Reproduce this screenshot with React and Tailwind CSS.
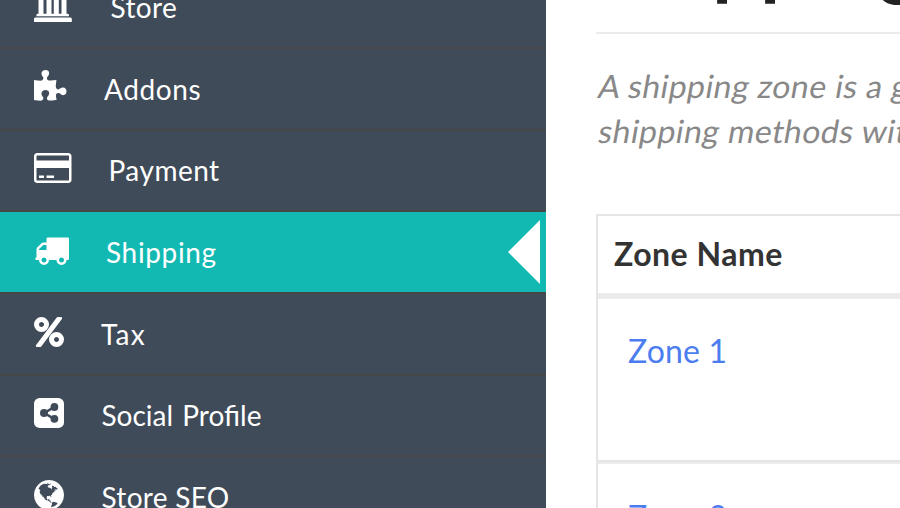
import React from "react";

const PUZZLE = "M1755 1083q0 81-44.5 135t-123.5 54q-41 0-77.5-17.5t-59-38-56.5-38-71-17.5q-110 0-110 124 0 39 16 115t15 115v5q-22 0-33 1-34 3-97.5 11.5t-115.5 13.5-98 5q-61 0-103-26.5t-42-83.5q0-37 17.5-71t38-56.5 38-59 17.5-77.5q0-79-54-123.5t-135-44.5q-84 0-143 45.5t-59 127.5q0 43 15 83t33.5 64.5 33.5 53 15 50.5q0 45-46 89-37 35-117 35-95 0-245-24-9-2-27.5-4t-27.5-4l-13-2q-1 0-3-1-2 0-2-1v-1024q2 1 17.5 3.5t34 5 21.5 3.5q150 24 245 24 80 0 117-35 46-44 46-89 0-22-15-50.5t-33.5-53-33.5-64.5-15-83q0-82 59-127.5t144-45.5q80 0 134 44.5t54 123.5q0 41-17.5 77.5t-38 59-38 56.5-17.5 71q0 57 42 83.5t103 26.5q64 0 180-15t163-17v2q-1 2-3.5 17.5t-5 34-3.5 21.5q-24 150-24 245 0 80 35 117 44 46 89 46 22 0 50.5-15t53-33.5 64.5-33.5 83-15q82 0 127.5 59t45.5 143z";

const CARD = "M1760 128q66 0 113 47t47 113v1216q0 66-47 113t-113 47h-1600q-66 0-113-47t-47-113v-1216q0-66 47-113t113-47h1600zm-1600 128q-13 0-22.5 9.5t-9.5 22.5v224h1664v-224q0-13-9.5-22.5t-22.5-9.5h-1600zm1600 1280q13 0 22.5-9.5t9.5-22.5v-608h-1664v608q0 13 9.5 22.5t22.5 9.5h1600zm-1504-128v-128h256v128h-256zm384 0v-128h384v128h-384z";

const TRUCK = "M640 1408q0-52-38-90t-90-38-90 38-38 90 38 90 90 38 90-38 38-90zm-384-512h384v-256h-158q-13 0-22 9l-195 195q-9 9-9 22v30zm1280 512q0-52-38-90t-90-38-90 38-38 90 38 90 90 38 90-38 38-90zm256-1088v1024q0 15-4 26.5t-13.5 18.5-16.5 11.5-23.5 6-22.5 2-25.5 0-22.5-.5q0 106-75 181t-181 75-181-75-75-181h-384q0 106-75 181t-181 75-181-75-75-181h-64q-3 0-22.5.5t-25.5 0-22.5-2-23.5-6-16.5-11.5-13.5-18.5-4-26.5q0-26 19-45t45-19v-320q0-8-.5-35t0-38 2.5-34.5 6.5-37 14-30.5 22.5-30l198-198q19-19 50.5-32t58.5-13h160v-192q0-26 19-45t45-19h1024q26 0 45 19t19 45z";

const PERCENT = "M1344 1344q0-52-38-90t-90-38-90 38-38 90 38 90 90 38 90-38 38-90zm-768-768q0-52-38-90t-90-38-90 38-38 90 38 90 90 38 90-38 38-90zm1024 768q0 159-112.5 271.5t-271.5 112.5-271.5-112.5-112.5-271.5 112.5-271.5 271.5-112.5 271.5 112.5 112.5 271.5zm-96-1088q0 20-13 38l-1056 1408q-19 26-51 26h-160q-26 0-45-19t-19-45q0-20 13-38l1056-1408q19-26 51-26h160q26 0 45 19t19 45zm-672 320q0 159-112.5 271.5t-271.5 112.5-271.5-112.5-112.5-271.5 112.5-271.5 271.5-112.5 271.5 112.5 112.5 271.5z";

const GLOBE = "M896 128q209 0 385.5 103t279.5 279.5 103 385.5-103 385.5-279.5 279.5-385.5 103-385.5-103-279.5-279.5-103-385.5 103-385.5 279.5-279.5 385.5-103zm274 521q-2 1-9.5 9.5t-13.5 9.5q2 0 4.5-5t5-11 3.5-7q6-7 22-15 14-6 52-12 34-8 51 11-2-2 9.5-13t14.5-12q3-2 15-4.5t15-7.5l2-22q-12 1-17.5-7t-6.5-21q0 2-6 8 0-7-4.5-8t-11.5 1-9 1q-10-3-15-7.5t-8-16.5-4-15q-2-5-9.5-11t-9.5-10q-1-2-2.5-5.5t-3-6.5-4-5.5-5.5-2.5-7 5-7.5 10-4.5 5q-3-2-6-1.5t-4.5 1-4.5 3-5 3.5q-3 2-8.5 3t-8.5 2q15-5-1-11-10-4-16-3 9-4 7.5-12t-8.5-14h5q-1-4-8.5-8.5t-17.5-8.5-13-6q-8-5-34-9.5t-33-.5q-5 6-4.5 10.5t4 14 3.5 12.5q1 6-5.5 13t-6.5 12q0 7 14 15.5t10 21.5q-3 8-16 16t-16 12q-5 8-1.5 18.5t10.5 16.5q2 2 1.5 4t-3.5 4.5-5.5 4-6.5 3.5l-3 2q-11 5-20.5-6t-13.5-26q-7-25-16-30-23-8-29 1-5-13-41-26-25-9-58-4 6-1 0-15-7-15-19-12 3-6 4-17.5t1-13.5q3-13 12-23 1-1 7-8.5t9.5-13.5.5-6q35 4 50-11 5-5 11.5-17t10.5-17q9-6 14-5.5t14.5 5.5 14.5 5q14 1 15.5-11t-7.5-20q12 1 3-17-4-7-8-9-12-4-27 5-8 4 2 8-1-1-9.5 10.5t-16.5 17.5-16-5q-1-1-5.5-13.5t-9.5-13.5q-8 0-16 15 3-8-11-15t-24-8q19-12-8-27-7-4-20.5-5t-19.5 4q-5 7-5.5 11.5t5 8 10.5 5.5 11.5 4 8.5 3q14 10 8 14-2 1-8.5 3.5t-11.5 4.5-6 4q-3 4 0 14t-2 14q-5-5-9-17.5t-7-16.5q7 9-25 6l-10-1q-4 0-16 2t-20.5 1-13.5-8q-4-8 0-20 1-4 4-2-4-3-11-9.5t-10-8.5q-46 15-94 41 6 1 12-1 5-2 13-6.5t10-5.5q34-14 42-7l5-5q14 16 20 25-7-4-30-1-20 6-22 12 7 12 5 18-4-3-11.5-10t-14.5-11-15-5q-16 0-22 1-146 80-235 222 7 7 12 8 4 1 5 9t2.5 11 11.5-3q9 8 3 19 1-1 44 27 19 17 21 21 3 11-10 18-1-2-9-9t-9-4q-3 5 .5 18.5t10.5 12.5q-7 0-9.5 16t-2.5 35.5-1 23.5l2 1q-3 12 5.5 34.5t21.5 19.5q-13 3 20 43 6 8 8 9 3 2 12 7.5t15 10 10 10.5q4 5 10 22.5t14 23.5q-2 6 9.5 20t10.5 23q-1 0-2.5 1t-2.5 1q3 7 15.5 14t15.5 13q1 3 2 10t3 11 8 2q2-20-24-62-15-25-17-29-3-5-5.5-15.5t-4.5-14.5q2 0 6 1.5t8.5 3.5 7.5 4 2 3q-3 7 2 17.5t12 18.5 17 19 12 13q6 6 14 19.5t0 13.5q9 0 20 10t17 20q5 8 8 26t5 24q2 7 8.5 13.5t12.5 9.5l16 8 13 7q5 2 18.5 10.5t21.5 11.5q10 4 16 4t14.5-2.5 13.5-3.5q15-2 29 15t21 21q36 19 55 11-2 1 .5 7.5t8 15.5 9 14.5 5.5 8.5q5 6 18 15t18 15q6-4 7-9-3 8 7 20t18 10q14-3 14-32-31 15-49-18 0-1-2.5-5.5t-4-8.5-2.5-8.5 0-7.5 5-3q9 0 10-3.5t-2-12.5-4-13q-1-8-11-20t-12-15q-5 9-16 8t-16-9q0 1-1.5 5.5t-1.5 6.5q-13 0-15-1 1-3 2.5-17.5t3.5-22.5q1-4 5.5-12t7.5-14.5 4-12.5-4.5-9.5-17.5-2.5q-19 1-26 20-1 3-3 10.5t-5 11.5-9 7q-7 3-24 2t-24-5q-13-8-22.5-29t-9.5-37q0-10 2.5-26.5t3-25-5.5-24.5q3-2 9-9.5t10-10.5q2-1 4.5-1.5t4.5 0 4-1.5 3-6q-1-1-4-3-3-3-4-3 7 3 28.5-1.5t27.5 1.5q15 11 22-2 0-1-2.5-9.5t-.5-13.5q5 27 29 9 3 3 15.5 5t17.5 5q3 2 7 5.5t5.5 4.5 5-.5 8.5-6.5q10 14 12 24 11 40 19 44 7 3 11 2t4.5-9.5 0-14-1.5-12.5l-1-8v-18l-1-8q-15-3-18.5-12t1.5-18.5 15-18.5q1-1 8-3.5t15.5-6.5 12.5-8q21-19 15-35 7 0 11-9-1 0-5-3t-7.5-5-4.5-2q9-5 2-16 5-3 7.5-11t7.5-10q9 12 21 2 7-8 1-16 5-7 20.5-10.5t18.5-9.5q7 2 8-2t1-12 3-12q4-5 15-9t13-5l17-11q3-4 0-4 18 2 31-11 10-11-6-20 3-6-3-9.5t-15-5.5q3-1 11.5-.5t10.5-1.5q15-10-7-16-17-5-43 12zm-163 877q206-36 351-189-3-3-12.5-4.5t-12.5-3.5q-18-7-24-8 1-7-2.5-13t-8-9-12.5-8-11-7q-2-2-7-6t-7-5.5-7.5-4.5-8.5-2-10 1l-3 1q-3 1-5.5 2.5t-5.5 3-4 3 0 2.5q-21-17-36-22-5-1-11-5.5t-10.5-7-10-1.5-11.5 7q-5 5-6 15t-2 13q-7-5 0-17.5t2-18.5q-3-6-10.5-4.5t-12 4.5-11.5 8.5-9 6.5-8.5 5.5-8.5 7.5q-3 4-6 12t-5 11q-2-4-11.5-6.5t-9.5-5.5q2 10 4 35t5 38q7 31-12 48-27 25-29 40-4 22 12 26 0 7-8 20.5t-7 21.5q0 6 2 16z";

function BankIcon() {
  return (
    <svg viewBox="0 0 38 38" className="h-[38px] w-[38px]" fill="currentColor">
      <path d="M19 0L38 7.5V10H0V7.5zM4.5 12.5h5V29h-5zM12.5 12.5h5V29h-5zM19.8 12.5h5V29h-5zM27.5 12.5h5V29h-5zM3.8 28.8h30q1.2.2 1.2 2v.4H2.3v-.4q0-1.8 1.5-2zM1.3 32.4h35.2q1.3.2 1.3 1.6v3H0v-3q0-1.4 1.3-1.6z" transform="translate(0 1)" />
    </svg>
  );
}

function ShareIcon() {
  return (
    <svg viewBox="0 0 30 30" className="h-[30px] w-[30px]">
      <rect width="30" height="30" rx="5.6" fill="currentColor" />
      <path d="M20.2 9.2L10.2 15l10 5.8" fill="none" stroke="#404b59" strokeWidth="2.5" />
      <g fill="#404b59">
        <circle cx="20.4" cy="9" r="3.9" />
        <circle cx="10" cy="15" r="4" />
        <circle cx="20.4" cy="20.8" r="3.9" />
      </g>
    </svg>
  );
}

const items = [
  { label: "Store", row: "h-[81px] -mt-[32px] border-b-2", icon: <BankIcon />, iconPos: "mt-[16px]", text: "pl-[76.5px] pt-[21px] tracking-[0.4px]" },
  { label: "Addons", row: "h-[82px] border-b-2", icon: <svg viewBox="91 -15 1792 1587.2" className="h-[31px] w-[35px]" fill="currentColor"><path d={PUZZLE} /></svg>, iconPos: "mt-[20.5px]", text: "pl-[70px] pt-[22px] tracking-[0.6px]" },
  { label: "Payment", row: "h-[81px] border-b-2", icon: <svg viewBox="0 128 1920 1536" className="h-[30px] w-[37.5px]" fill="currentColor"><path d={CARD} /></svg>, iconPos: "mt-[22px]", text: "pl-[74.5px] pt-[21px] tracking-[0.5px]" },
  { label: "Shipping", row: "h-[82px] border-b-2 bg-[#12b9b2]", active: true, icon: <svg viewBox="0 128 1792 1536" className="h-[30px] w-[35px]" fill="currentColor"><path d={TRUCK} /></svg>, iconPos: "mt-[22.5px]", text: "pl-[72px] pt-[22px] tracking-[0.65px]" },
  { label: "Tax", row: "h-[82px] border-b-2", icon: <svg viewBox="64 192 1536 1536" className="h-[30px] w-[30px]" fill="currentColor"><path d={PERCENT} /></svg>, iconPos: "mt-[23px]", text: "pl-[67px] pt-[22px] tracking-[1.2px]" },
  { label: "Social Profile", row: "h-[81px] border-b-2", icon: <ShareIcon />, iconPos: "mt-[22px]", text: "pl-[67.5px] pt-[21px] [word-spacing:2px]" },
  { label: "Store SEO", row: "h-[82px] border-b-2", icon: <svg viewBox="128 128 1536 1536" className="h-[30px] w-[30px]" fill="currentColor"><path d={GLOBE} /></svg>, iconPos: "mt-[23px]", text: "pl-[67.5px] pt-[22px] tracking-[0.3px]" },
];

export default function App() {
  return (
    <div className="flex h-[508px] w-[900px] overflow-hidden bg-white font-['Lato',sans-serif]">
      <nav className="h-full w-[546px] shrink-0 overflow-hidden bg-[#404b59] text-white">
        {items.map((it) => (
          <a key={it.label} className={`flex items-start border-[#474747] pl-[34px] ${it.row}`}>
            <span className={`w-0 shrink-0 whitespace-nowrap ${it.iconPos}`}>
              <span className="flex w-[38px]">{it.icon}</span>
            </span>
            <span className={`whitespace-nowrap text-[28px] leading-[36px] ${it.text}`}>{it.label}</span>
            {it.active && (
              <span className="mt-2 mr-1.5 ml-auto border-y-[32px] border-r-[32px] border-y-transparent border-r-white" />
            )}
          </a>
        ))}
      </nav>
      <main className="h-full min-w-0 grow overflow-hidden pl-[50px]">
        <h1 className="-mt-[91px] h-[125px] border-b-2 border-[#ebebeb] text-[80px] leading-[100px] font-bold tracking-[2.5px] whitespace-nowrap text-[#222]">Shipping Zones</h1>
        <p className="mt-[29px] -ml-px h-[151px] w-[500px] text-[32px] leading-[45px] whitespace-nowrap text-[#888]">
          <span className="block origin-bottom-left -skew-x-[10deg] tracking-[0.45px]">A shipping zone is a geographic region</span>
          <span className="block origin-bottom-left -skew-x-[10deg] tracking-[0.45px]">shipping methods within</span>
        </p>
        <table className="block w-[500px] border-2 border-r-0 border-[#e5e5e5]">
          <thead className="block">
            <tr className="block h-[83px] border-b-[6px] border-[#ebebeb] pt-[18px] pl-4 text-[32px] leading-[40px] text-[#333]">
              <th className="block text-left font-bold tracking-[0.5px]">Zone Name</th>
            </tr>
          </thead>
          <tbody className="block text-[32px] leading-[40px] tracking-[0.2px] text-[#4b7df0]">
            <tr className="block h-[163px] border-b-2 border-[#e5e5e5] pt-[32px] pl-[30px]">
              <td className="block">Zone 1</td>
            </tr>
            <tr className="block h-[163px] border-t-2 border-[#ebebeb] pt-[33px] pl-[30px]">
              <td className="block">Zone 2</td>
            </tr>
          </tbody>
        </table>
      </main>
    </div>
  );
}
